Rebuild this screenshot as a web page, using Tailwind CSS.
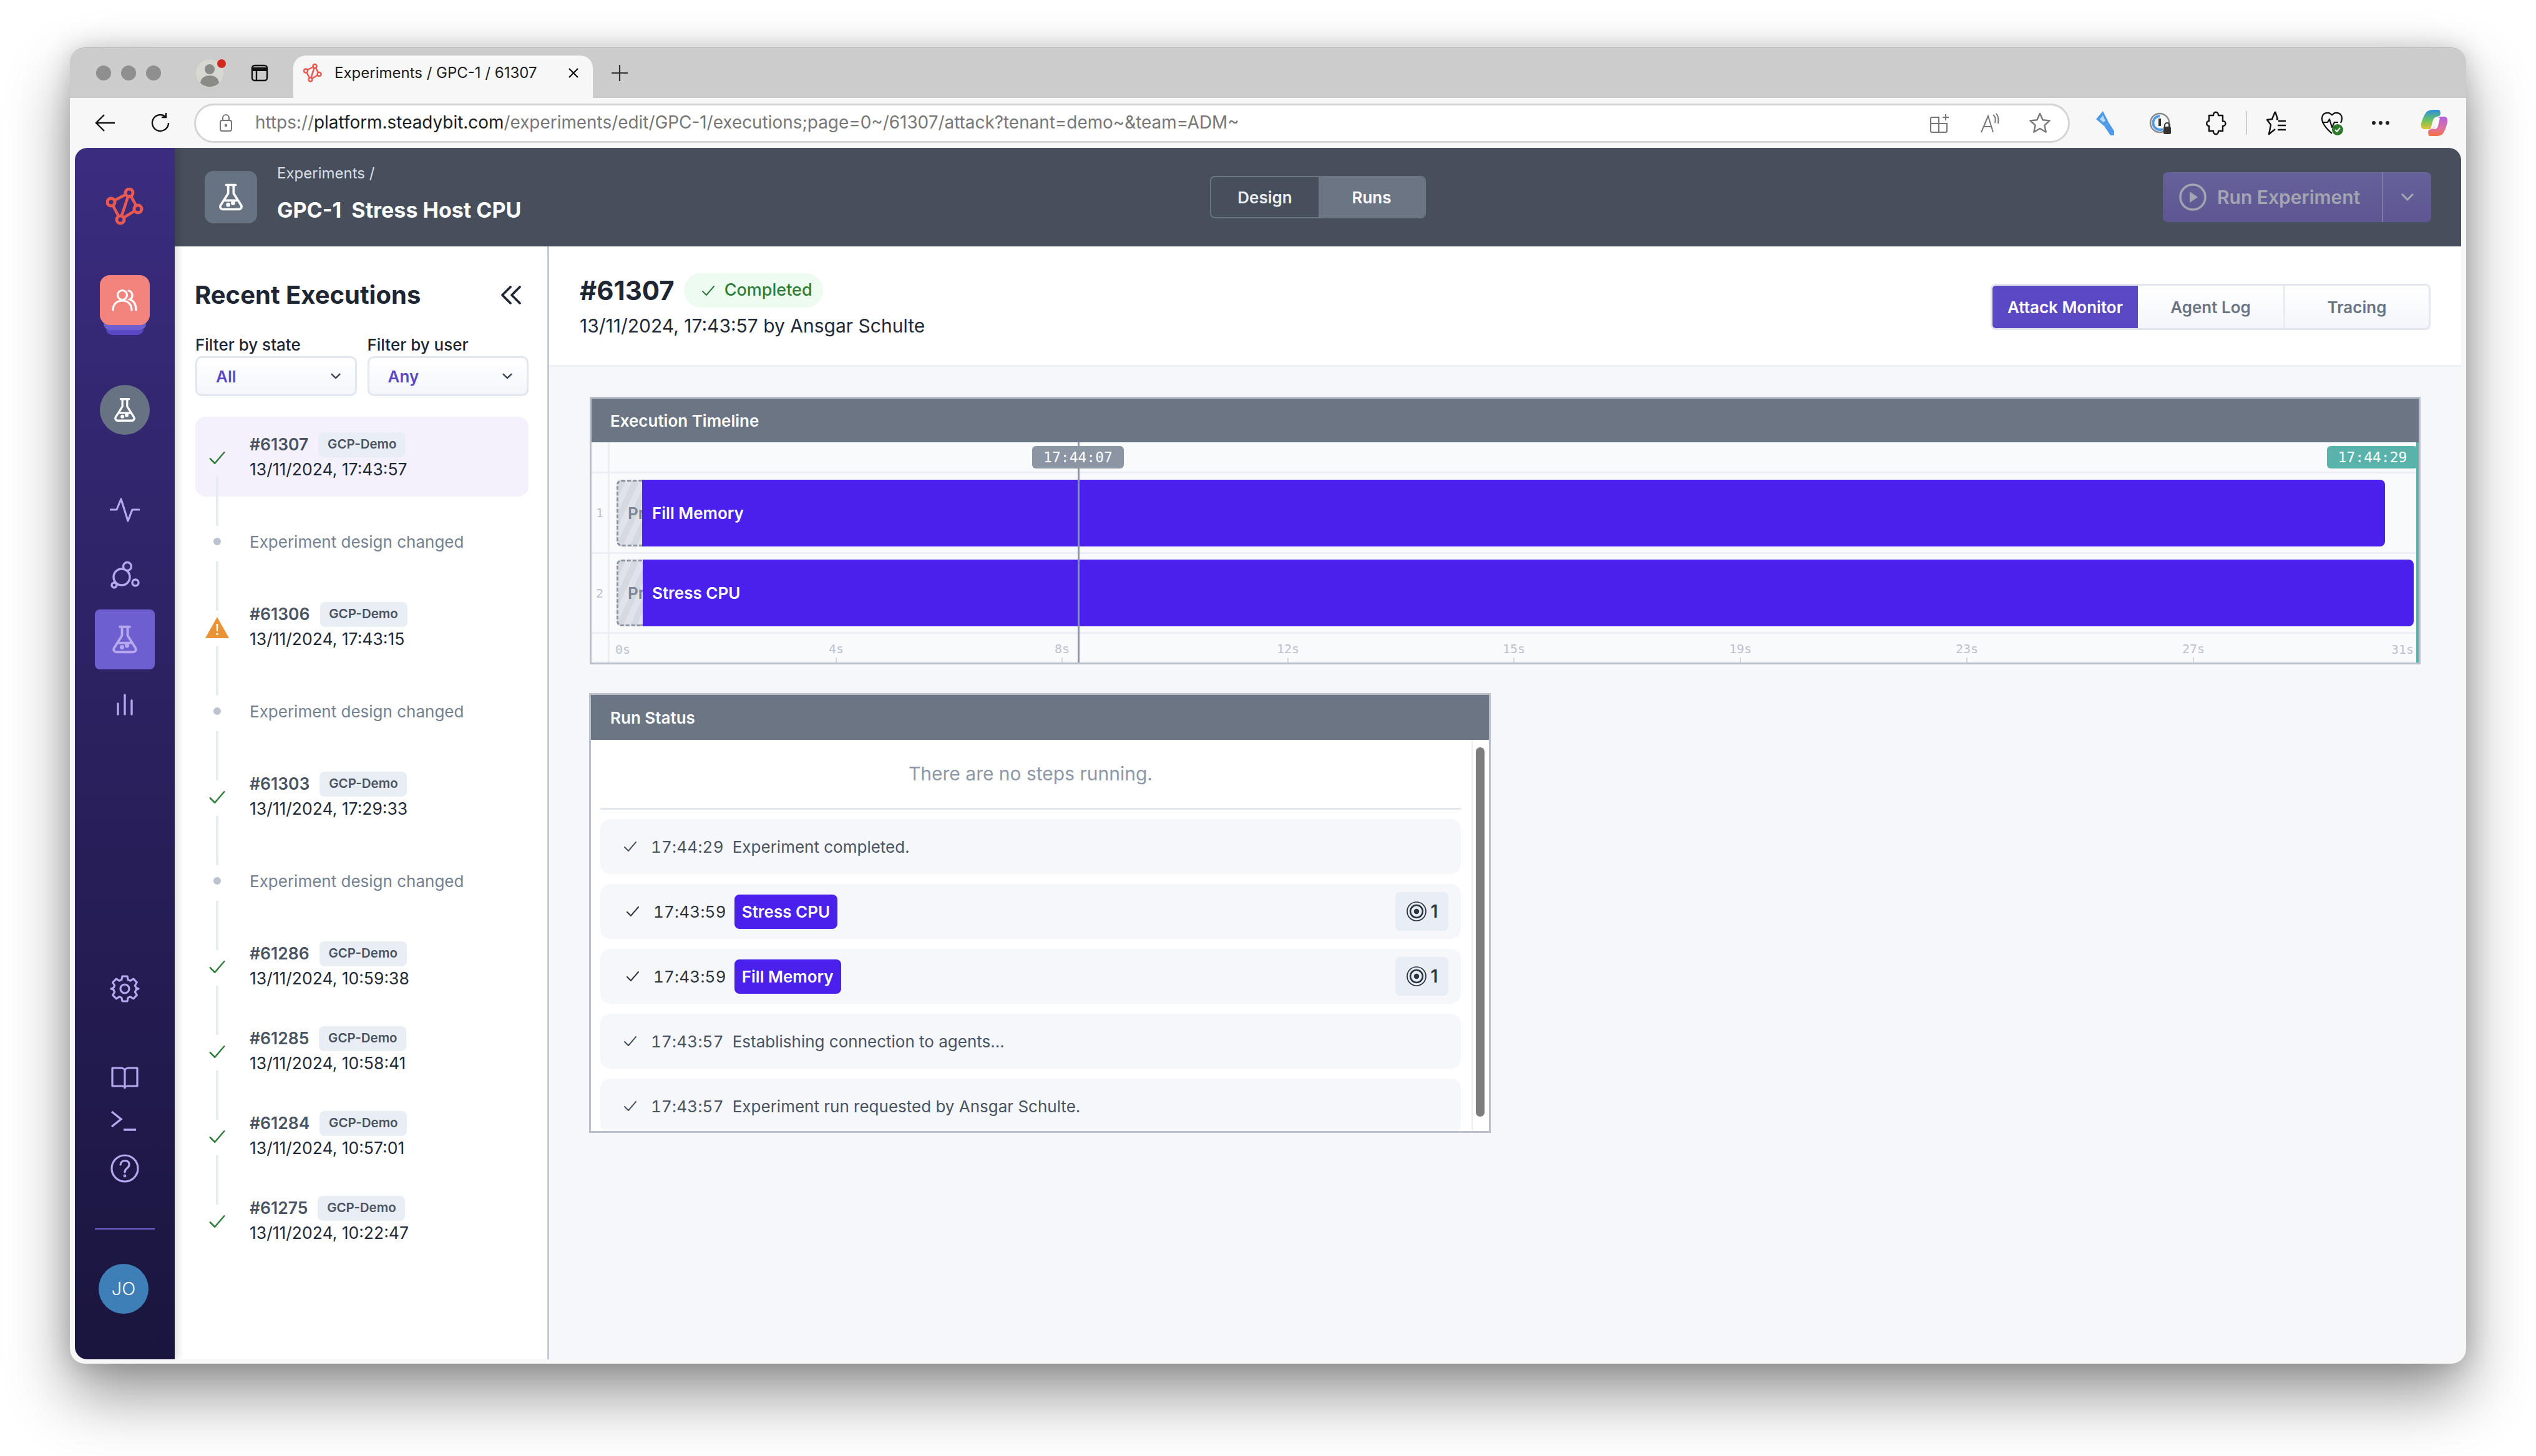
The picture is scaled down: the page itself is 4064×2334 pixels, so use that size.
<!DOCTYPE html>
<html lang="en">
<head>
  <meta charset="UTF-8" />
  <title>Experiments / GPC-1 / 61307</title>
  <script src="https://cdn.jsdelivr.net/npm/@tailwindcss/browser@4"></script>
</head>
<body class="bg-white w-[4064px] h-[2334px] overflow-hidden pt-[76px] pl-[112px] font-[Inter,sans-serif]">
  <svg class="hidden">
    <symbol id="flask" viewBox="0 0 24 24" fill="none" stroke="currentColor" stroke-width="1.7" stroke-linecap="round" stroke-linejoin="round">
      <path d="M8.5 3h7M10 3v6.2L4.3 18.2A1.9 1.9 0 0 0 5.9 21h12.2a1.9 1.9 0 0 0 1.6-2.8L14 9.2V3M7 14.5h10" />
      <circle cx="10" cy="17.6" r=".7" fill="currentColor" />
      <circle cx="13.6" cy="16.4" r=".7" fill="currentColor" />
    </symbol>
    <symbol id="check" viewBox="0 0 24 24" fill="none" stroke="currentColor" stroke-width="2" stroke-linecap="round" stroke-linejoin="round">
      <path d="M3 13l6 6L21 5" />
    </symbol>
    <symbol id="chev" viewBox="0 0 24 24" fill="none" stroke="currentColor" stroke-width="2.6" stroke-linecap="round" stroke-linejoin="round">
      <path d="M5 8.5l7 7 7-7" />
    </symbol>
    <symbol id="target" viewBox="0 0 24 24" fill="none" stroke="currentColor">
      <circle cx="12" cy="12" r="10.6" stroke-width="1.2" />
      <circle cx="12" cy="12" r="7" stroke-width="1.8" />
      <circle cx="12" cy="12" r="3" fill="currentColor" stroke="none" />
    </symbol>
  </svg>

  <div class="w-[3840px] h-[2110px] flex flex-col bg-[#f7f7f7] rounded-[24px] border-t border-[#b5b5b5] shadow-[0_50px_100px_rgba(0,0,0,0.42),0_0_40px_rgba(0,0,0,0.18)] overflow-hidden">
    <!-- tab strip -->
    <div class="h-[80px] shrink-0 bg-[#cccccc] flex items-end">
      <div class="w-[358px] h-[80px] shrink-0 flex items-center relative">
        <span class="absolute left-[42px] w-[24px] h-[24px] rounded-full bg-[#8f8f8f]"></span>
        <span class="absolute left-[82px] w-[24px] h-[24px] rounded-full bg-[#8f8f8f]"></span>
        <span class="absolute left-[122px] w-[24px] h-[24px] rounded-full bg-[#8f8f8f]"></span>
        <svg class="absolute left-[202px] top-[18px] w-[44px] h-[44px]" viewBox="0 0 44 44"><circle cx="22" cy="22" r="22" fill="#d8d8d2" /><circle cx="22" cy="16" r="8" fill="#8a8a86" /><path d="M7 38c1-9 8-12 15-12s14 3 15 12a22 22 0 0 1-30 0z" fill="#8a8a86" /></svg>
        <span class="absolute left-[236px] top-[18px] w-[14px] h-[14px] rounded-full bg-[#d22a1e]"></span>
        <svg class="absolute left-[290px] top-[26px] w-[28px] h-[28px]" viewBox="0 0 28 28" fill="none" stroke="#111" stroke-width="2.4"><rect x="2" y="2" width="24" height="24" rx="4" /><path d="M2 8h24" stroke-width="6" /><path d="M9 8v18" /></svg>
      </div>
      <div class="w-[480px] h-[68px] rounded-t-[20px] bg-[#f7f7f7] flex items-center pl-[16px] pb-[12px] shrink-0">
        <svg class="w-[30px] h-[32px]" viewBox="0 0 60 60" fill="none" stroke="#e9594f" stroke-width="5"><path d="M37 8L8 23l15 28 28-17L37 8 23 51" /><circle cx="37" cy="8" r="6" fill="#f7f7f7" /><circle cx="8" cy="23" r="6" fill="#f7f7f7" /><circle cx="51" cy="34" r="6" fill="#f7f7f7" /><circle cx="23" cy="51" r="6" fill="#f7f7f7" /></svg>
        <span class="ml-[20px] text-[24px] text-[#1c1c1c] whitespace-nowrap w-[373px]">Experiments / GPC-1 / 61307</span>
        <svg class="w-[20px] h-[20px]" viewBox="0 0 20 20" stroke="#111" stroke-width="2.2"><path d="M3 3l14 14M17 3L3 17" /></svg>
      </div>
      <div class="h-[68px] flex items-center pl-[29px] pb-[12px]">
        <svg class="w-[28px] h-[28px]" viewBox="0 0 28 28" stroke="#333" stroke-width="2.2"><path d="M14 1v26M1 14h26" /></svg>
      </div>
    </div>

    <!-- address bar -->
    <div class="h-[80px] shrink-0 flex items-center relative">
      <svg class="ml-[40px] w-[34px] h-[34px]" viewBox="0 0 34 34" fill="none" stroke="#111" stroke-width="2.4"><path d="M32 17H3M15 4L2 17l13 13" /></svg>
      <svg class="ml-[55px] w-[34px] h-[34px]" viewBox="0 0 34 34" fill="none" stroke="#111" stroke-width="2.4"><path d="M29 17a13 13 0 1 1-5-10.2M25 1v7h-7" /></svg>
      <div class="ml-[36px] w-[3006px] h-[63px] rounded-full bg-white border-[3px] border-[#d4d4d4] flex items-center pl-[36px] pr-[28px]">
        <svg class="w-[24px] h-[30px] shrink-0" viewBox="0 0 24 30" fill="none" stroke="#777" stroke-width="2"><rect x="3" y="11" width="18" height="17" rx="3" /><path d="M7 11V7a5 5 0 0 1 10 0v4" /><circle cx="12" cy="19" r="1.2" fill="#777" /></svg>
        <span class="ml-[35px] text-[27.9px] text-[#777] whitespace-nowrap">https://<span class="text-[#1c1c1c]">platform.steadybit.com</span>/experiments/edit/GPC-1/executions;page=0~/61307/attack?tenant=demo~&amp;team=ADM~</span>
        <span class="flex-1"></span>
        <svg class="w-[34px] h-[34px] shrink-0" viewBox="0 0 34 34" fill="none" stroke="#777" stroke-width="2"><path d="M4 8h11v24H4a2 2 0 0 1-2-2V10a2 2 0 0 1 2-2zM2 18h26M15 18h13v12a2 2 0 0 1-2 2H15zM26 3v10M21 8h10" /></svg>
        <svg class="ml-[47px] w-[34px] h-[34px] shrink-0" viewBox="0 0 34 34" fill="none" stroke="#777" stroke-width="2"><path d="M2 32L13 6l8 26M6 23h12M21 4c4 3 4 9 3 13M26 2c4 5 4 11 3 16" /></svg>
        <svg class="ml-[45px] w-[34px] h-[34px] shrink-0" viewBox="0 0 34 34" fill="none" stroke="#777" stroke-width="2.4" stroke-linejoin="round"><path d="M17 2l4.600 10.300 11 1.100-8.300 7.400 2.400 10.900L17 26l-9.700 5.700 2.400-10.900L1.400 13.400l11-1.100z" /></svg>
      </div>
      <svg class="ml-[38px] w-[34px] h-[40px]" viewBox="0 0 34 40"><path d="M4 14L15 1l9 18-7 6z" fill="#4f9ae8" /><path d="M17 25l7-6 9 14v7h-6z" fill="#4f9ae8" /><path d="M10 14l5-6 4 9-4 2z" fill="#b9dbf8" /></svg>
      <svg class="ml-[55px] w-[36px] h-[40px]" viewBox="0 0 36 40" fill="none"><circle cx="17" cy="20" r="15" stroke="#8a8a8a" stroke-width="2.5" /><path d="M17 9a11 11 0 1 0 5 21" stroke="#4f9ae8" stroke-width="4" /><path d="M15 13h4v12h-4z" fill="#333" /><rect x="23" y="26" width="12" height="12" rx="2" fill="#333" /><path d="M25 27v-3a4 4 0 0 1 8 0v3" stroke="#333" stroke-width="2" /></svg>
      <svg class="ml-[54px] w-[34px] h-[40px]" viewBox="0 0 34 40" fill="none" stroke="#111" stroke-width="2.4" stroke-linejoin="round"><path d="M13 8c0-7 8-7 8 0h7v9c6 0 6 8 0 8v8h-7c0 7-8 7-8 0H6v-8c-5 0-5-8 0-8V8z" /></svg>
      <span class="ml-[31px] w-[2px] h-[38px] bg-[#cfcfcf]"></span>
      <svg class="ml-[30px] w-[36px] h-[40px]" viewBox="0 0 36 40" fill="none" stroke="#111" stroke-width="2.4" stroke-linejoin="round"><path d="M15 2l4 12h-2M15 2l-5 12-8 1 6 8-3 15 10-8M20 17h12M19 24h13M19 31h13" /></svg>
      <svg class="ml-[50px] w-[40px] h-[42px]" viewBox="0 0 40 42" fill="none" stroke="#111" stroke-width="2.2" stroke-linejoin="round"><path d="M20 9c-4-7-16-5-16 5 0 9 8 17 16 24M20 9c4-7 16-5 16 5 0 3-1 5-2 7M4 20h9l3-5 4 13 4-8h6" /><circle cx="29" cy="32" r="9" fill="#2d7a2a" stroke="none" /><path d="M25 32l3 3 5-6" stroke="#fff" stroke-width="2" /></svg>
      <span class="ml-[44px] w-[28px] flex justify-between"><i class="w-[6px] h-[6px] rounded-full bg-[#222]"></i><i class="w-[6px] h-[6px] rounded-full bg-[#222]"></i><i class="w-[6px] h-[6px] rounded-full bg-[#222]"></i></span>
      <svg class="ml-[50px] w-[44px] h-[44px]" viewBox="0 0 44 44" fill="none"><defs><linearGradient id="cp1" x1="0" y1="0" x2="0" y2="1"><stop offset="0" stop-color="#2f8fe0" /><stop offset=".55" stop-color="#6dc45c" /><stop offset="1" stop-color="#e8c030" /></linearGradient><linearGradient id="cp2" x1="0" y1="0" x2="0" y2="1"><stop offset="0" stop-color="#b060e0" /><stop offset=".6" stop-color="#e070a0" /><stop offset="1" stop-color="#f07040" /></linearGradient></defs><path d="M20 1h10c3 4 2 9 0 10l-6 2c-3 1-4 4-5 8l-3 11H6c-4 0-6-4-5-9 2-7 5-14 8-18 3-3 7-4 11-4z" fill="url(#cp1)" /><path d="M33 12h5c4 0 6 4 5 9-2 9-5 16-8 19-3 3-7 3-11 3H14c-3-4-2-9 0-10l6-2c3-1 4-4 5-8l3-8c1-2 3-3 5-3z" fill="url(#cp2)" /><path d="M26 14h5l-3 13c-1 3-3 5-6 5h-4c4 0 5-3 6-6z" fill="#fff" /></svg>
    </div>

    <!-- app -->
    <div class="w-[3824px] h-[1942px] ml-[8px] flex rounded-[20px] overflow-hidden bg-white shrink-0">
      <!-- nav rail -->
      <nav class="w-[160px] shrink-0 flex flex-col items-center bg-gradient-to-b from-[#3b2c80] to-[#1a153e] text-[#b5a8ef] relative z-10 shadow-[6px_0_10px_rgba(0,0,0,0.12)]">
        <svg class="mt-[64px] w-[60px] h-[60px] shrink-0" viewBox="0 0 60 60" fill="none" stroke="#e9594f" stroke-width="4.5"><path d="M37 8L8 23l15 28 28-17L37 8 23 51" /><circle cx="37" cy="8" r="6" fill="#3a2c7e" stroke-width="5" /><circle cx="8" cy="23" r="6" fill="#3a2c7e" stroke-width="5" /><circle cx="51" cy="34" r="6" fill="#3a2c7e" stroke-width="5" /><circle cx="23" cy="51" r="6" fill="#3a2c7e" stroke-width="5" /></svg>
        <div class="mt-[80px] w-[80px] h-[80px] relative shrink-0">
          <div class="absolute left-[10px] top-[50px] w-[60px] h-[46px] rounded-[10px] bg-[#5b48c4]"></div>
          <div class="absolute left-[6px] top-[44px] w-[68px] h-[44px] rounded-[10px] bg-[#6e5fd0]"></div>
          <div class="absolute inset-0 rounded-[16px] bg-[#f2837d] flex items-center justify-center">
            <svg class="w-[42px] h-[42px]" viewBox="0 0 42 42" fill="none" stroke="#fff" stroke-width="3.2" stroke-linecap="round"><circle cx="17" cy="13" r="7.5" /><path d="M2 37c0-9 6-15 15-15s15 6 15 15M27 6a7.5 7.500 0 0 1 2 14c6 2 10 8 10 17" /></svg>
          </div>
        </div>
        <div class="mt-[96px] w-[80px] h-[80px] rounded-full bg-[#677382] flex items-center justify-center text-white shrink-0"><svg class="w-[46px] h-[46px]"><use href="#flask" /></svg></div>
        <svg class="mt-[96px] w-[48px] h-[48px] shrink-0" viewBox="0 0 48 48" fill="none" stroke="currentColor" stroke-width="3.2" stroke-linecap="round" stroke-linejoin="round"><path d="M1 24h10l7-17 11 35 7-18h11" /></svg>
        <svg class="mt-[57px] w-[48px] h-[48px] shrink-0" viewBox="0 0 48 48" fill="none" stroke="currentColor" stroke-width="3.4"><circle cx="19" cy="27" r="13" /><circle cx="28" cy="10" r="6.5" fill="#33276f" /><circle cx="41" cy="36" r="5" /><circle cx="7" cy="40" r="4" fill="#2f2568" /></svg>
        <div class="mt-[31px] w-[96px] h-[96px] rounded-[8px] bg-[#6e5fd0] flex items-center justify-center shrink-0"><svg class="w-[54px] h-[54px]"><use href="#flask" /></svg></div>
        <svg class="mt-[33px] w-[48px] h-[48px] shrink-0" viewBox="0 0 48 48" stroke="currentColor" stroke-width="3.4" stroke-linecap="round"><path d="M13 22v17M24 8v31M35 17v22" /></svg>

        <svg class="mt-[407px] w-[48px] h-[48px] shrink-0" viewBox="0 0 24 24" fill="none" stroke="currentColor" stroke-width="1.6" stroke-linejoin="round"><path d="M10 2h4l.6 2.800 1.800.8 2.500-1.500 2.800 2.800-1.500 2.500.8 1.800L23 12l-2 .8-.8 1.800 1.500 2.500-2.800 2.800-2.500-1.500-1.800.8L14 22h-4l-.6-2.800-1.800-.8-2.500 1.500-2.800-2.800 1.500-2.500-.8-1.800L1 12l2-.8.8-1.800-1.500-2.500 2.800-2.800 2.500 1.500 1.800-.8z" /><circle cx="12" cy="12" r="3.5" /></svg>
        <svg class="mt-[95px] w-[48px] h-[48px] shrink-0" viewBox="0 0 48 48" fill="none" stroke="currentColor" stroke-width="3.2" stroke-linejoin="round"><path d="M4 8h14c3 0 6 2 6 5v27c0-2-3-3-6-3H4zM44 8H30c-3 0-6 2-6 5v27c0-2 3-3 6-3h14z" /></svg>
        <svg class="mt-[21px] w-[48px] h-[48px] shrink-0" viewBox="0 0 48 48" fill="none" stroke="currentColor" stroke-width="3.4"><path d="M3 9l15 12L3 33M22 38h20" /></svg>
        <svg class="mt-[28px] w-[48px] h-[48px] shrink-0" viewBox="0 0 48 48" fill="none" stroke="currentColor" stroke-width="3.2" stroke-linecap="round"><circle cx="24" cy="24" r="21" /><path d="M17 18c1-9 15-8 14 0 0 6-7 5-7 12" /><circle cx="24" cy="36" r=".8" fill="currentColor" /></svg>
        <div class="mt-[72px] w-[96px] h-[2px] bg-[#6e5fd0] shrink-0"></div>
        <div class="mt-[55px] -ml-[4px] w-[80px] h-[80px] rounded-full bg-[#3f7fb8] flex items-center justify-center text-white text-[29px] font-light shrink-0">JO</div>
      </nav>

      <div class="flex-1 flex flex-col min-w-0">
        <!-- experiment header -->
        <header class="h-[158px] shrink-0 bg-[#464f5b] flex items-center pl-[48px] pr-[48px] relative">
          <div class="w-[84px] h-[84px] rounded-[14px] bg-[#677382] flex items-center justify-center text-white shrink-0"><svg class="w-[52px] h-[52px]"><use href="#flask" /></svg></div>
          <div class="ml-[32px] flex flex-col">
            <span class="text-[24px] leading-[32px] text-[#d9dfe8] -mt-[14px]">Experiments /</span>
            <span class="text-[34px] leading-[40px] mt-[23px] font-bold text-white whitespace-nowrap">GPC-1&nbsp; Stress Host CPU</span>
          </div>
          <div class="absolute left-[1659px] top-[45px] w-[346px] h-[68px] rounded-[8px] border-2 border-[#6b7583] flex overflow-hidden text-[26px] font-semibold">
            <span class="w-[172px] flex items-center justify-center text-[#e9edf4]">Design</span>
            <span class="flex-1 flex items-center justify-center bg-[#6b7583] text-white">Runs</span>
          </div>
          <div class="ml-auto w-[430px] h-[80px] rounded-[8px] bg-gradient-to-b from-[#66619a] to-[#5d5693] flex items-center text-[#a3a5b0]">
            <svg class="ml-[26px] w-[44px] h-[44px]" viewBox="0 0 44 44" fill="none"><circle cx="22" cy="22" r="20" stroke="currentColor" stroke-width="3.5" /><path d="M17 13l13 9-13 9z" fill="currentColor" /></svg>
            <span class="ml-[17px] text-[30px] font-semibold whitespace-nowrap">Run Experiment</span>
            <span class="ml-auto w-[79px] h-full border-l-2 border-[#7d79a8] flex items-center justify-center"><svg class="w-[28px] h-[28px]"><use href="#chev" /></svg></span>
          </div>
        </header>

        <div class="flex-1 flex min-h-0">
          <!-- recent executions -->
          <aside class="w-[600px] shrink-0 bg-white border-r-[3px] border-[#c4cad5] pl-[32px] pr-[30px]">
            <div class="mt-[52px] h-[52px] flex items-center justify-between text-[#1d2632]">
              <h2 class="text-[40px] font-bold whitespace-nowrap">Recent Executions</h2>
              <svg class="w-[36px] h-[36px] mr-[10px]" viewBox="0 0 36 36" fill="none" stroke="currentColor" stroke-width="3.8" stroke-linecap="round" stroke-linejoin="round"><path d="M17 5L4 18l13 13M32 5L19 18l13 13" /></svg>
            </div>
            <div class="mt-[35px] grid grid-cols-2 gap-x-[17px] pl-[1px]">
              <div>
                <label class="block text-[26px] leading-[38px] font-medium text-[#1d2632] h-[37px]">Filter by state</label>
                <div class="h-[64px] rounded-[10px] border-[3px] border-[#e1e6ef] bg-gradient-to-b from-white to-[#f4f6fb] flex items-center pl-[30px] pr-[20px] justify-between text-[#5b48c4] text-[26px] font-semibold">All<svg class="w-[22px] h-[22px] text-[#3c4552]"><use href="#chev" /></svg></div>
              </div>
              <div>
                <label class="block text-[26px] leading-[38px] font-medium text-[#1d2632] h-[37px]">Filter by user</label>
                <div class="h-[64px] rounded-[10px] border-[3px] border-[#e1e6ef] bg-gradient-to-b from-white to-[#f4f6fb] flex items-center pl-[30px] pr-[20px] justify-between text-[#5b48c4] text-[26px] font-semibold">Any<svg class="w-[22px] h-[22px] text-[#3c4552]"><use href="#chev" /></svg></div>
              </div>
            </div>

            <ul class="mt-[33px] ml-[1px] flex flex-col gap-[8px]">
              <li class="relative h-[128px] flex items-center rounded-[16px] bg-[#f4f1fd]">
                <span class="w-[70px] flex justify-center text-[#2e7d3a]"><svg class="w-[30px] h-[30px] mt-[4px]"><use href="#check" /></svg></span>
                <div class="ml-[17px]"><div class="flex items-center gap-[16px] h-[40px] text-[26.5px] font-semibold text-[#4a5361]">#61307<span class="w-[140px] h-[40px] rounded-[8px] bg-[#e9edf4] flex items-center justify-center text-[20.5px]">GCP-Demo</span></div><div class="text-[26.5px] leading-[39px] text-[#1f2937]">13/11/2024, 17:43:57</div></div>
                <span class="absolute left-[33px] top-[96px] w-[4px] h-[79px] bg-[#e7ebf2]"></span>
              </li>
              <li class="relative h-[128px] flex items-center">
                <span class="w-[70px] flex justify-center"><i class="w-[12px] h-[12px] rounded-full bg-[#bcc3d0]"></i></span>
                <span class="ml-[17px] text-[26px] text-[#758091]">Experiment design changed</span>
                <span class="absolute left-[33px] top-[96px] w-[4px] h-[79px] bg-[#e7ebf2]"></span>
              </li>
              <li class="relative h-[128px] flex items-center">
                <span class="w-[70px] flex justify-center"><svg class="w-[38px] h-[34px] mt-[4px]" viewBox="0 0 38 34"><path d="M19 0l19 34H0z" fill="#ea9234" /><path d="M17.500 11h3l-.5 12h-2zM17.500 26h3v3h-3z" fill="#fff" /></svg></span>
                <div class="ml-[17px]"><div class="flex items-center gap-[16px] h-[40px] text-[26.5px] font-semibold text-[#4a5361]">#61306<span class="w-[140px] h-[40px] rounded-[8px] bg-[#e9edf4] flex items-center justify-center text-[20.5px]">GCP-Demo</span></div><div class="text-[26.5px] leading-[39px] text-[#1f2937]">13/11/2024, 17:43:15</div></div>
                <span class="absolute left-[33px] top-[96px] w-[4px] h-[79px] bg-[#e7ebf2]"></span>
              </li>
              <li class="relative h-[128px] flex items-center">
                <span class="w-[70px] flex justify-center"><i class="w-[12px] h-[12px] rounded-full bg-[#bcc3d0]"></i></span>
                <span class="ml-[17px] text-[26px] text-[#758091]">Experiment design changed</span>
                <span class="absolute left-[33px] top-[96px] w-[4px] h-[79px] bg-[#e7ebf2]"></span>
              </li>
              <li class="relative h-[128px] flex items-center">
                <span class="w-[70px] flex justify-center text-[#2e7d3a]"><svg class="w-[30px] h-[30px] mt-[4px]"><use href="#check" /></svg></span>
                <div class="ml-[17px]"><div class="flex items-center gap-[16px] h-[40px] text-[26.5px] font-semibold text-[#4a5361]">#61303<span class="w-[140px] h-[40px] rounded-[8px] bg-[#e9edf4] flex items-center justify-center text-[20.5px]">GCP-Demo</span></div><div class="text-[26.5px] leading-[39px] text-[#1f2937]">13/11/2024, 17:29:33</div></div>
                <span class="absolute left-[33px] top-[96px] w-[4px] h-[79px] bg-[#e7ebf2]"></span>
              </li>
              <li class="relative h-[128px] flex items-center">
                <span class="w-[70px] flex justify-center"><i class="w-[12px] h-[12px] rounded-full bg-[#bcc3d0]"></i></span>
                <span class="ml-[17px] text-[26px] text-[#758091]">Experiment design changed</span>
                <span class="absolute left-[33px] top-[96px] w-[4px] h-[79px] bg-[#e7ebf2]"></span>
              </li>
              <li class="relative h-[128px] flex items-center">
                <span class="w-[70px] flex justify-center text-[#2e7d3a]"><svg class="w-[30px] h-[30px] mt-[4px]"><use href="#check" /></svg></span>
                <div class="ml-[17px]"><div class="flex items-center gap-[16px] h-[40px] text-[26.5px] font-semibold text-[#4a5361]">#61286<span class="w-[140px] h-[40px] rounded-[8px] bg-[#e9edf4] flex items-center justify-center text-[20.5px]">GCP-Demo</span></div><div class="text-[26.5px] leading-[39px] text-[#1f2937]">13/11/2024, 10:59:38</div></div>
                <span class="absolute left-[33px] top-[96px] w-[4px] h-[79px] bg-[#e7ebf2]"></span>
              </li>
              <li class="relative h-[128px] flex items-center">
                <span class="w-[70px] flex justify-center text-[#2e7d3a]"><svg class="w-[30px] h-[30px] mt-[4px]"><use href="#check" /></svg></span>
                <div class="ml-[17px]"><div class="flex items-center gap-[16px] h-[40px] text-[26.5px] font-semibold text-[#4a5361]">#61285<span class="w-[140px] h-[40px] rounded-[8px] bg-[#e9edf4] flex items-center justify-center text-[20.5px]">GCP-Demo</span></div><div class="text-[26.5px] leading-[39px] text-[#1f2937]">13/11/2024, 10:58:41</div></div>
                <span class="absolute left-[33px] top-[96px] w-[4px] h-[79px] bg-[#e7ebf2]"></span>
              </li>
              <li class="relative h-[128px] flex items-center">
                <span class="w-[70px] flex justify-center text-[#2e7d3a]"><svg class="w-[30px] h-[30px] mt-[4px]"><use href="#check" /></svg></span>
                <div class="ml-[17px]"><div class="flex items-center gap-[16px] h-[40px] text-[26.5px] font-semibold text-[#4a5361]">#61284<span class="w-[140px] h-[40px] rounded-[8px] bg-[#e9edf4] flex items-center justify-center text-[20.5px]">GCP-Demo</span></div><div class="text-[26.5px] leading-[39px] text-[#1f2937]">13/11/2024, 10:57:01</div></div>
                <span class="absolute left-[33px] top-[96px] w-[4px] h-[79px] bg-[#e7ebf2]"></span>
              </li>
              <li class="relative h-[128px] flex items-center">
                <span class="w-[70px] flex justify-center text-[#2e7d3a]"><svg class="w-[30px] h-[30px] mt-[4px]"><use href="#check" /></svg></span>
                <div class="ml-[17px]"><div class="flex items-center gap-[16px] h-[40px] text-[26.5px] font-semibold text-[#4a5361]">#61275<span class="w-[140px] h-[40px] rounded-[8px] bg-[#e9edf4] flex items-center justify-center text-[20.5px]">GCP-Demo</span></div><div class="text-[26.5px] leading-[39px] text-[#1f2937]">13/11/2024, 10:22:47</div></div>
              </li>
            </ul>
          </aside>

          <!-- run detail -->
          <main class="flex-1 min-w-0 bg-[#f5f7fb] flex flex-col">
            <div class="h-[193px] shrink-0 bg-white border-b-[3px] border-[#eceff4] flex items-start pl-[49px] pr-[49px]">
              <div class="mt-[43px]">
                <div class="flex items-center h-[55px]">
                  <h1 class="text-[42px] font-bold text-[#1d2632]">#61307</h1>
                  <span class="ml-[15px] h-[55px] w-[223px] rounded-full bg-[#eefbf1] flex items-center pl-[27px] text-[#2e7d3a] text-[27px] font-medium"><svg class="w-[24px] h-[24px] mr-[14px]"><use href="#check" /></svg>Completed</span>
                </div>
                <p class="mt-[7px] text-[30px] leading-[44px] text-[#1f2937] whitespace-nowrap">13/11/2024, 17:43:57 by Ansgar Schulte</p>
              </div>
              <div class="ml-auto mt-[60px] h-[74px] w-[705px] rounded-[8px] border-[3px] border-[#e1e6ef] bg-gradient-to-b from-white to-[#f4f6fb] flex overflow-hidden text-[26px] font-semibold text-[#6b7482]">
                <span class="w-[233px] bg-[#5b48c4] text-white flex items-center justify-center">Attack Monitor</span>
                <span class="w-[236px] border-r-[3px] border-[#e9edf3] flex items-center justify-center">Agent Log</span>
                <span class="flex-1 flex items-center justify-center">Tracing</span>
              </div>
            </div>

            <div class="pl-[65px] pt-[48px]">
              <!-- timeline -->
              <section class="w-[2934px] h-[429px] border-[3px] border-[#b9c0cc] flex flex-col">
                <div class="h-[70px] shrink-0 bg-[#6b7583] flex items-center pl-[30px] text-[26px] font-semibold text-white">Execution Timeline</div>
                <div class="relative flex-1 bg-[#f9fafc]">
                  <div class="h-[50px] flex border-b-[3px] border-[#eceff4]"><span class="w-[29px] border-r-[3px] border-[#eceff4]"></span></div>
                  <div class="h-[129px] flex border-b-[3px] border-[#eceff4]">
                    <span class="w-[29px] shrink-0 border-r-[3px] border-[#eceff4] flex items-center justify-center font-['DejaVu_Sans_Mono',monospace] text-[20px] text-[#bcc2ce]">1</span>
                    <div class="pl-[11px] pt-[10px] flex">
                      <div class="w-[41px] h-[107px] border-[3px] border-r-0 border-dashed border-[#8b95a3] rounded-l-[8px] bg-[repeating-linear-gradient(115deg,#d5d9e0_0,#d5d9e0_10px,#e0e3e9_10px,#e0e3e9_20px)] overflow-hidden flex items-center pl-[15px] text-[26px] font-semibold text-[#7d8694]">Pr</div>
                      <div class="w-[2793px] h-[107px] bg-[#4a21ec] rounded-r-[8px] flex items-center pl-[16px] text-[26px] font-semibold text-white">Fill Memory</div>
                    </div>
                  </div>
                  <div class="h-[128px] flex border-b-[3px] border-[#eceff4]">
                    <span class="w-[29px] shrink-0 border-r-[3px] border-[#eceff4] flex items-center justify-center font-['DejaVu_Sans_Mono',monospace] text-[20px] text-[#bcc2ce]">2</span>
                    <div class="pl-[11px] pt-[9px] flex">
                      <div class="w-[42px] h-[107px] border-[3px] border-r-0 border-dashed border-[#8b95a3] rounded-l-[8px] bg-[repeating-linear-gradient(115deg,#d5d9e0_0,#d5d9e0_10px,#e0e3e9_10px,#e0e3e9_20px)] overflow-hidden flex items-center pl-[15px] text-[26px] font-semibold text-[#7d8694]">Pr</div>
                      <div class="w-[2838px] h-[107px] bg-[#4a21ec] rounded-r-[8px] flex items-center pl-[15px] text-[26px] font-semibold text-white">Stress CPU</div>
                    </div>
                  </div>
                  <div class="relative h-[46px] flex font-['DejaVu_Sans_Mono',monospace] text-[20px] text-[#bcc2ce]">
                    <span class="w-[29px] border-r-[3px] border-[#eceff4]"></span>
                    <span class="absolute left-[38px] top-[10px]">0s</span>
                    <span class="absolute left-[392px] bottom-0 -translate-x-1/2 flex flex-col items-center leading-[28px]"><span>4s</span><i class="w-[2px] h-[8px] bg-[#d5d9e0]"></i></span>
                    <span class="absolute left-[754px] bottom-0 -translate-x-1/2 flex flex-col items-center leading-[28px]"><span>8s</span><i class="w-[2px] h-[8px] bg-[#d5d9e0]"></i></span>
                    <span class="absolute left-[1116px] bottom-0 -translate-x-1/2 flex flex-col items-center leading-[28px]"><span>12s</span><i class="w-[2px] h-[8px] bg-[#d5d9e0]"></i></span>
                    <span class="absolute left-[1478px] bottom-0 -translate-x-1/2 flex flex-col items-center leading-[28px]"><span>15s</span><i class="w-[2px] h-[8px] bg-[#d5d9e0]"></i></span>
                    <span class="absolute left-[1841px] bottom-0 -translate-x-1/2 flex flex-col items-center leading-[28px]"><span>19s</span><i class="w-[2px] h-[8px] bg-[#d5d9e0]"></i></span>
                    <span class="absolute left-[2204px] bottom-0 -translate-x-1/2 flex flex-col items-center leading-[28px]"><span>23s</span><i class="w-[2px] h-[8px] bg-[#d5d9e0]"></i></span>
                    <span class="absolute left-[2567px] bottom-0 -translate-x-1/2 flex flex-col items-center leading-[28px]"><span>27s</span><i class="w-[2px] h-[8px] bg-[#d5d9e0]"></i></span>
                    <span class="absolute right-[8px] top-[10px]">31s</span>
                  </div>
                  <i class="absolute left-[779px] top-0 bottom-0 w-[3px] bg-[#8b95a3]"></i>
                  <span class="absolute left-[706px] top-[6px] w-[147px] h-[36px] rounded-[6px] bg-[#8b95a3] flex items-center justify-center font-['DejaVu_Sans_Mono',monospace] text-[23px] text-white">17:44:07</span>
                  <i class="absolute right-0 top-0 bottom-0 w-[4px] bg-[#59b3aa]"></i>
                  <span class="absolute right-[1px] top-[6px] w-[146px] h-[36px] rounded-[6px] bg-[#59b3aa] flex items-center justify-center font-['DejaVu_Sans_Mono',monospace] text-[23px] text-white">17:44:29</span>
                </div>
              </section>

              <!-- run status -->
              <section class="mt-[46px] -ml-[1px] w-[1445px] h-[705px] border-[3px] border-[#b9c0cc] flex flex-col overflow-hidden">
                <div class="h-[72px] shrink-0 bg-[#6b7583] flex items-center pl-[31px] text-[26px] font-semibold text-white">Run Status</div>
                <div class="flex-1 min-h-0 flex bg-white">
                  <div class="w-[1411px] shrink-0 pl-[15px] pr-[17px] overflow-hidden">
                    <div class="h-[112px] border-b-[3px] border-[#e1e6ef] flex items-center justify-center text-[30px] text-[#8d97a5]">There are no steps running.</div>
                    <ul class="mt-[15px] flex flex-col gap-[16px] text-[26px]">
                      <li class="h-[88px] shrink-0 rounded-[16px] bg-[#f5f7fb] flex items-center pl-[36px] text-[#4a5361]">
                        <svg class="w-[24px] h-[24px]"><use href="#check" /></svg>
                        <span class="ml-[21px] tabular-nums tracking-[0.2px]">17:44:29</span><span class="ml-[14px]">Experiment completed.</span>
                      </li>
                      <li class="h-[88px] shrink-0 rounded-[16px] bg-[#f5f7fb] flex items-center pl-[40px] pr-[20px] text-[#2b3441]">
                        <svg class="w-[24px] h-[24px]"><use href="#check" /></svg>
                        <span class="ml-[21px] tabular-nums tracking-[0.2px]">17:43:59</span><span class="ml-[13px] h-[55px] px-[12px] rounded-[8px] bg-[#4a21ec] flex items-center font-semibold text-white">Stress CPU</span>
                        <span class="ml-auto w-[85px] h-[62px] rounded-[8px] bg-[#e9edf4] flex items-center justify-center gap-[6px] font-semibold text-[28px] text-[#2b3441]"><svg class="w-[34px] h-[34px]"><use href="#target" /></svg>1</span>
                      </li>
                      <li class="h-[88px] shrink-0 rounded-[16px] bg-[#f5f7fb] flex items-center pl-[40px] pr-[20px] text-[#2b3441]">
                        <svg class="w-[24px] h-[24px]"><use href="#check" /></svg>
                        <span class="ml-[21px] tabular-nums tracking-[0.2px]">17:43:59</span><span class="ml-[13px] h-[55px] px-[12px] rounded-[8px] bg-[#4a21ec] flex items-center font-semibold text-white">Fill Memory</span>
                        <span class="ml-auto w-[85px] h-[62px] rounded-[8px] bg-[#e9edf4] flex items-center justify-center gap-[6px] font-semibold text-[28px] text-[#2b3441]"><svg class="w-[34px] h-[34px]"><use href="#target" /></svg>1</span>
                      </li>
                      <li class="h-[88px] shrink-0 rounded-[16px] bg-[#f5f7fb] flex items-center pl-[36px] text-[#4a5361]">
                        <svg class="w-[24px] h-[24px]"><use href="#check" /></svg>
                        <span class="ml-[21px] tabular-nums tracking-[0.2px]">17:43:57</span><span class="ml-[14px]">Establishing connection to agents...</span>
                      </li>
                      <li class="h-[88px] shrink-0 rounded-[16px] bg-[#f5f7fb] flex items-center pl-[36px] text-[#4a5361]">
                        <svg class="w-[24px] h-[24px]"><use href="#check" /></svg>
                        <span class="ml-[21px] tabular-nums tracking-[0.2px]">17:43:57</span><span class="ml-[14px]">Experiment run requested by Ansgar Schulte.</span>
                      </li>
                    </ul>
                  </div>
                  <div class="flex-1 border-l-2 border-[#eceff4] pl-[5px] pt-[12px]"><div class="w-[14px] h-[592px] rounded-full bg-[#7d7d7d]"></div></div>
                </div>
              </section>
            </div>
          </main>
        </div>
      </div>
    </div>
  </div>
</body>
</html>
